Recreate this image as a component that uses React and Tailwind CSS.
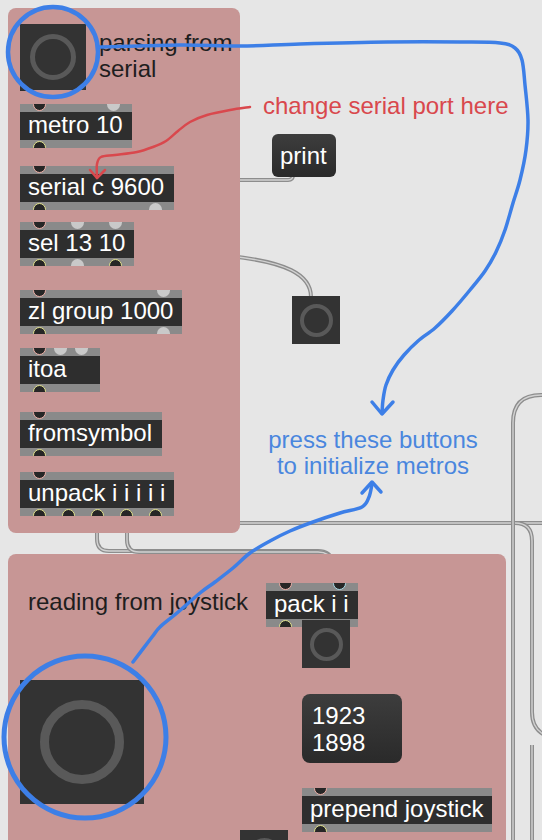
import React from "react";

function smooth(pts) {
  let d = `M${pts[0][0]} ${pts[0][1]}`;
  for (let i = 0; i < pts.length - 1; i++) {
    const p0 = pts[i - 1] || pts[i];
    const p1 = pts[i];
    const p2 = pts[i + 1];
    const p3 = pts[i + 2] || p2;
    const c1x = p1[0] + (p2[0] - p0[0]) / 6;
    const c1y = p1[1] + (p2[1] - p0[1]) / 6;
    const c2x = p2[0] - (p3[0] - p1[0]) / 6;
    const c2y = p2[1] - (p3[1] - p1[1]) / 6;
    d += ` C${c1x.toFixed(1)} ${c1y.toFixed(1)} ${c2x.toFixed(1)} ${c2y.toFixed(1)} ${p2[0]} ${p2[1]}`;
  }
  return d;
}

const Cable = ({ d }) => (
  <g fill="none" strokeLinecap="butt" strokeLinejoin="round">
    <path d={d} stroke="#8d8d8d" strokeWidth="4" />
    <path d={d} stroke="#d2d2d2" strokeWidth="1.4" />
  </g>
);

const Dot = ({ pos, kind, bottom }) => {
  const base = `absolute ${pos} w-[13px] h-[13px] rounded-full ${bottom ? "bottom-[-6px]" : "top-[-6px]"}`;
  if (kind === "cold") return <div className={`${base} bg-[#c9c9c9]`} />;
  if (kind === "hot") return <div className={`${base} bg-[#262626] border-[1.5px] border-[#f0b1a8]`} />;
  if (kind === "cyan") return <div className={`${base} bg-[#262626] border-[1.5px] border-[#a9dbe8]`} />;
  return <div className={`${base} bg-[#262626] border-[1.5px] border-[#e4e48e]`} />;
};

const Obj = ({ className, label, ins = [], outs = [] }) => (
  <div className={`absolute ${className} h-[44px] overflow-hidden bg-[#8a8a8a] flex flex-col`}>
    <div className="h-[8px]" />
    <div className="h-[28px] bg-[#2e2e2e] pl-[8px] text-white text-[24px] leading-[26px] whitespace-nowrap">
      {label}
    </div>
    <div className="h-[8px]" />
    {ins.map(([p, k], i) => (
      <Dot key={"i" + i} pos={p} kind={k} />
    ))}
    {outs.map(([p, k], i) => (
      <Dot key={"o" + i} pos={p} kind={k} bottom />
    ))}
  </div>
);

const Bang = ({ className, ring }) => (
  <div className={`absolute ${className} bg-[#333333] flex items-center justify-center`}>
    <div className={`rounded-full border-[#595959] ${ring}`} />
  </div>
);

export default function App() {
  const blue1 = smooth([
    [99, 47], [180, 45], [240, 46], [300, 44], [387, 42], [460, 42], [500, 43], [515, 48],
    [522, 60], [525, 85], [528, 120], [526, 150], [520, 180], [513, 203], [505, 230],
    [496, 252], [485, 271], [470, 290], [452, 311], [435, 328], [418, 341], [404, 355],
    [393, 370], [386, 385], [383, 400], [382, 413],
  ]);
  const blue2 = smooth([
    [372, 484], [369, 497], [362, 507], [340, 513], [313, 522], [290, 531], [270, 541],
    [250, 553], [233, 568], [215, 582], [200, 593], [177, 613], [160, 627], [152, 637], [133, 662],
  ]);
  const red = smooth([
    [250, 107], [230, 110], [207, 115], [190, 122], [178, 131], [166, 141], [153, 147],
    [137, 152], [115, 155], [101, 157], [97, 164], [97, 178],
  ]);

  return (
    <div className="relative w-[542px] h-[840px] overflow-hidden bg-[#e6e6e6] font-['Liberation_Sans',Arial,sans-serif]">
      {/* cables */}
      <svg className="absolute inset-0" width="542" height="840">
        <Cable d="M230 180 L288 180 Q293 180 293 175" />
        <Cable d="M230 256 C285 262 311 274 311 297" />
        <Cable d="M230 523 L545 523" />
        <Cable d="M230 523 L515 523 Q532 523 532 541 L532 712 Q532 729 545 735" />
        <Cable d="M548 395 L541 395 Q513 395 513 423 L513 845" />
        <Cable d="M532 745 L532 845" />
        <Cable d="M97 525 L97 539 Q97 551 109 551 L318 551 Q330 551 333 562" />
        <Cable d="M127 525 L127 540 Q127 552 139 552 L318 552 Q330 552 333 562" />
      </svg>

      {/* panels */}
      <div className="absolute left-[8px] top-[8px] w-[232px] h-[525px] rounded-[8px] bg-[#c79695]" />
      <div className="absolute left-[8px] top-[554px] w-[498px] h-[300px] rounded-[8px] bg-[#c79695]" />

      {/* panel 1 content */}
      <div className="absolute left-[20px] top-[84px] w-[13px] h-[7px] bg-[#2e2e2e]" />
      <Bang className="left-[20px] top-[24px] w-[66px] h-[66px]" ring="w-[46px] h-[46px] border-[5px]" />
      <div className="absolute left-[99px] top-[30px] text-[24px] leading-[26px] text-[#1e1e1e]">
        parsing from
        <br />
        serial
      </div>

      <Obj
        className="left-[20px] top-[104px] w-[112px]"
        label="metro 10"
        ins={[["left-[13px]", "hot"], ["left-[87px]", "cold"]]}
        outs={[["left-[13px]", "out"]]}
      />
      <Obj
        className="left-[20px] top-[166px] w-[154px]"
        label="serial c 9600"
        ins={[["left-[13px]", "hot"]]}
        outs={[["left-[13px]", "out"], ["left-[129px]", "cold"]]}
      />
      <Obj
        className="left-[20px] top-[222px] w-[114px]"
        label="sel 13 10"
        ins={[["left-[13px]", "hot"], ["left-[51px]", "cold"], ["left-[89px]", "cold"]]}
        outs={[["left-[13px]", "out"], ["left-[51px]", "cold"], ["left-[89px]", "out"]]}
      />
      <Obj
        className="left-[20px] top-[290px] w-[162px]"
        label="zl group 1000"
        ins={[["left-[13px]", "hot"], ["left-[137px]", "cold"]]}
        outs={[["left-[13px]", "out"], ["left-[137px]", "cold"]]}
      />
      <Obj
        className="left-[20px] top-[348px] w-[80px]"
        label="itoa"
        ins={[["left-[13px]", "hot"], ["left-[34px]", "cold"], ["left-[55px]", "cold"]]}
        outs={[["left-[13px]", "out"]]}
      />
      <Obj
        className="left-[20px] top-[412px] w-[142px]"
        label="fromsymbol"
        ins={[["left-[13px]", "hot"]]}
        outs={[["left-[13px]", "out"]]}
      />
      <Obj
        className="left-[20px] top-[472px] w-[154px]"
        label="unpack i i i i i"
        ins={[["left-[13px]", "hot"]]}
        outs={[
          ["left-[13px]", "out"],
          ["left-[42px]", "out"],
          ["left-[71px]", "out"],
          ["left-[100px]", "out"],
          ["left-[129px]", "out"],
        ]}
      />

      {/* outside panel 1 */}
      <div className="absolute left-[272px] top-[134px] w-[64px] h-[43px] rounded-[6px] bg-gradient-to-b from-[#3d3d3d] to-[#2a2a2a] pl-[8px] flex items-center text-white text-[24px] leading-[26px]">
        print
      </div>
      <Bang className="left-[292px] top-[296px] w-[48px] h-[48px]" ring="w-[33px] h-[33px] border-[4px]" />
      <div className="absolute left-[263px] top-[93px] text-[24px] leading-[26px] text-[#d9484d] whitespace-nowrap">
        change serial port here
      </div>
      <div className="absolute left-[253px] top-[427px] w-[240px] text-center text-[24px] leading-[26px] text-[#4a86de] whitespace-nowrap">
        press these buttons
        <br />
        to initialize metros
      </div>

      {/* panel 2 content */}
      <div className="absolute left-[28px] top-[589px] text-[24px] leading-[26px] text-[#1e1e1e] whitespace-nowrap">
        reading from joystick
      </div>
      <Bang className="left-[20px] top-[680px] w-[124px] h-[124px]" ring="w-[84px] h-[84px] border-[9px]" />
      <Obj
        className="left-[266px] top-[583px] w-[92px]"
        label="pack i i"
        ins={[["left-[13px]", "hot"], ["left-[67px]", "cyan"]]}
        outs={[["left-[13px]", "out"]]}
      />
      <Bang className="left-[302px] top-[620px] w-[48px] h-[48px]" ring="w-[33px] h-[33px] border-[4px]" />
      <div className="absolute left-[302px] top-[694px] w-[100px] h-[69px] rounded-[8px] bg-gradient-to-b from-[#3d3d3d] to-[#2a2a2a] pl-[10px] pt-[8px] text-white text-[24px] leading-[27px]">
        1923
        <br />
        1898
      </div>
      <Obj
        className="left-[302px] top-[788px] w-[190px]"
        label="prepend joystick"
        ins={[["left-[12px]", "hot"]]}
        outs={[["left-[12px]", "out"]]}
      />
      <Bang className="left-[240px] top-[830px] w-[48px] h-[48px]" ring="w-[33px] h-[33px] border-[4px]" />

      {/* annotations */}
      <svg className="absolute inset-0 pointer-events-none" width="542" height="840">
        <g fill="none" strokeLinecap="round" strokeLinejoin="round">
          <circle cx="53" cy="52" r="45" stroke="#3d7fe7" strokeWidth="4.5" />
          <circle cx="85" cy="737" r="81" stroke="#3d7fe7" strokeWidth="5" />
          <path d={blue1} stroke="#3d7fe7" strokeWidth="3.5" />
          <path d="M372 402 L382 414 L393 402" stroke="#3d7fe7" strokeWidth="3.5" />
          <path d={blue2} stroke="#3d7fe7" strokeWidth="3.5" />
          <path d="M362 493 L372 482 L381 492" stroke="#3d7fe7" strokeWidth="3.5" />
          <path d={red} stroke="#d9484d" strokeWidth="2.5" />
          <path d="M90 170 L97 178 L105 170" stroke="#d9484d" strokeWidth="2.5" />
        </g>
      </svg>
    </div>
  );
}
